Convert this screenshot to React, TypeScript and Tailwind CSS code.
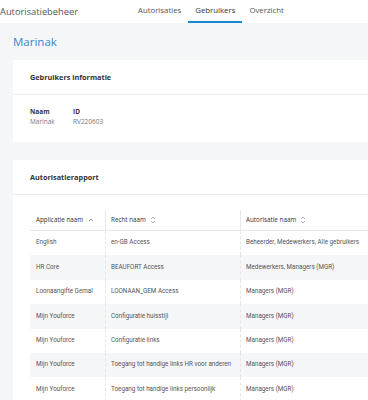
import React from "react";

const rows: [string, string, string][] = [
  ["English", "en-GB Access", "Beheerder, Medewerkers, Alle gebruikers"],
  ["HR Core", "BEAUFORT Access", "Medewerkers, Managers (MGR)"],
  ["Loonaangifte Gemal", "LOONAAN_GEM Access", "Managers (MGR)"],
  ["Mijn Youforce", "Configuratie huisstijl", "Managers (MGR)"],
  ["Mijn Youforce", "Configuratie links", "Managers (MGR)"],
  ["Mijn Youforce", "Toegang tot handige links HR voor anderen", "Managers (MGR)"],
  ["Mijn Youforce", "Toegang tot handige links persoonlijk", "Managers (MGR)"],
];

function SortBoth() {
  return (
    <svg width="6" height="8" viewBox="0 0 6 8" className="ml-[4px]">
      <path d="M1 3 L3 1 L5 3" fill="none" stroke="#9aa0a6" strokeWidth="0.8" />
      <path d="M1 5 L3 7 L5 5" fill="none" stroke="#9aa0a6" strokeWidth="0.8" />
    </svg>
  );
}

function SortUp() {
  return (
    <svg width="6" height="6" viewBox="0 0 6 6" className="ml-[5px]">
      <path d="M1 4 L3 2 L5 4" fill="none" stroke="#7a8086" strokeWidth="0.8" />
    </svg>
  );
}

export default function App() {
  return (
    <div
      className="w-[368px] h-[400px] overflow-hidden bg-[#f5f6f8] flex flex-col"
      style={{ fontFamily: "'Open Sans', sans-serif" }}
    >
      <div className="h-[23px] bg-white flex items-stretch shrink-0">
        <div className="flex items-center text-[9.3px] text-[#555] w-[131px]">Autorisatiebeheer</div>
        <div className="flex items-stretch text-[7.8px] text-[#555]">
          <div className="px-[7px] flex items-center border-b-2 border-transparent">Autorisaties</div>
          <div className="px-[7px] flex items-center border-b-2 border-[#1a8ad8] text-[#333]">Gebruikers</div>
          <div className="px-[7px] flex items-center border-b-2 border-transparent">Overzicht</div>
        </div>
      </div>
      <div className="pl-[13px] flex flex-col">
        <div className="h-[37px] flex items-center text-[11.5px] text-[#3a86c8]">Marinak</div>
        <div className="bg-white flex flex-col">
          <div className="h-[35px] flex items-center pl-[17px] text-[7.3px] font-bold text-[#333] border-b border-[#eef0f2]">
            Gebruikers informatie
          </div>
          <div className="h-[47px] flex pl-[17px] pt-[12px] text-[6.5px] text-[#777]">
            <div className="w-[43px] flex flex-col leading-[10px]">
              <span className="font-bold text-[#333]">Naam</span>
              <span>Marinak</span>
            </div>
            <div className="flex flex-col leading-[10px]">
              <span className="font-bold text-[#333]">ID</span>
              <span>RV220603</span>
            </div>
          </div>
        </div>
        <div className="h-[18px]" />
        <div className="bg-white flex flex-col">
          <div className="h-[35px] flex items-center pl-[17px] text-[7.3px] font-bold text-[#333] border-b border-[#eef0f2]">
            Autorisatierapport
          </div>
          <div className="pl-[17px] pt-[15px]" style={{ fontFamily: "Roboto, sans-serif" }}>
            <div className="flex h-[21px] text-[6.3px] text-[#333] border-b border-[#e6e8eb]" style={{ fontFamily: "'Open Sans', sans-serif" }}>
              <div className="w-[76px] pl-[6px] flex items-center border-r border-[#e6e8eb]">
                Applicatie naam <SortUp />
              </div>
              <div className="w-[135px] pl-[5px] flex items-center border-r border-[#e6e8eb]">
                Recht naam <SortBoth />
              </div>
              <div className="flex-1 pl-[5px] flex items-center">
                Autorisatie naam <SortBoth />
              </div>
            </div>
            {rows.map((r, i) => (
              <div
                key={i}
                className={`flex h-[24.4px] text-[6.3px] text-[#555] ${i % 2 === 1 ? "bg-[#f5f6f8]" : "bg-white"}`}
              >
                <div className="w-[76px] pl-[6px] flex items-center border-r border-dashed border-[#e3e5e8] whitespace-nowrap">{r[0]}</div>
                <div className="w-[135px] pl-[5px] flex items-center border-r border-dashed border-[#e3e5e8] whitespace-nowrap">{r[1]}</div>
                <div className="flex-1 pl-[5px] flex items-center whitespace-nowrap">{r[2]}</div>
              </div>
            ))}
          </div>
        </div>
      </div>
    </div>
  );
}
